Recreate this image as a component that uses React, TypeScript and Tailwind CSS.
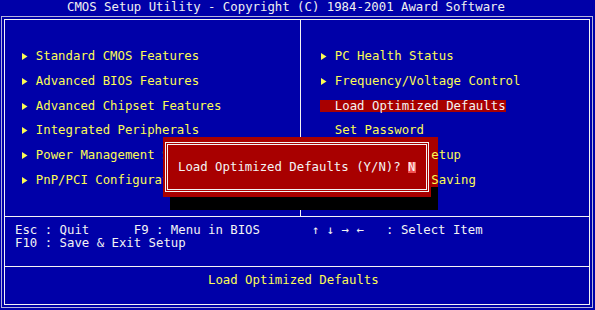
const left = [
  "Standard CMOS Features",
  "Advanced BIOS Features",
  "Advanced Chipset Features",
  "Integrated Peripherals",
  "Power Management Setup",
  "PnP/PCI Configurations",
];

const right = [
  { label: "PC Health Status", arrow: true },
  { label: "Frequency/Voltage Control", arrow: true },
  { label: "Load Optimized Defaults", arrow: false, active: true },
  { label: "Set Password", arrow: false },
  { label: "Save & Exit Setup", arrow: false },
  { label: "Exit Without Saving", arrow: false },
];

function Arrow() {
  return (
    <svg width="6" height="7" viewBox="0 0 6 7" className="ml-[1px]">
      <polygon points="0,0 5.5,3.5 0,7" fill="#fcfc54" />
    </svg>
  );
}

function Row({ label, arrow, active }: { label: string; arrow?: boolean; active?: boolean }) {
  if (active) {
    return (
      <div className="h-[24.8px] flex items-center">
        <span className="relative z-10 inline-block w-[25ch] pl-[2ch] bg-[#a80000] text-[#f4f4f4] leading-[12.5px] whitespace-pre">
          {label}
        </span>
      </div>
    );
  }
  return (
    <div className="h-[24.8px] flex items-center">
      <span className="w-[2ch] flex items-center">{arrow && <Arrow />}</span>
      <span className="relative z-10 text-[#fcfc54] whitespace-pre">{label}</span>
    </div>
  );
}

export default function App() {
  return (
    <div className="relative w-[595px] h-[310px] overflow-hidden bg-[#0000a8] font-['DejaVu_Sans_Mono',monospace] text-[12.33px] leading-[13px]">
      <div className="h-[16px] pl-[67px] pt-[1px] text-[#f0f0f0] whitespace-pre">
        CMOS Setup Utility - Copyright (C) 1984-2001 Award Software
      </div>

      <div className="ml-[1px] w-[592px] h-[292px] border border-[#b4b4dc] p-[2px]">
        <div className="h-full border border-[#f4f4f4] flex flex-col">
          {/* menu */}
          <div className="h-[197px] border-b border-[#f4f4f4] flex">
            <div className="w-[296px] border-r border-[#f4f4f4] pt-[24.2px] pl-[16px]">
              {left.map((l) => (
                <Row key={l} label={l} arrow />
              ))}
            </div>
            <div className="flex-1 pt-[24.2px] pl-[19px]">
              {right.map((r) => (
                <Row key={r.label} {...r} />
              ))}
            </div>
          </div>

          {/* keys */}
          <div className="h-[50px] border-b border-[#f4f4f4] pt-[6.5px] pl-[10px] text-[#f4f4f4] whitespace-pre">
            <div>Esc : Quit      F9 : Menu in BIOS       ↑ ↓ → ←   : Select Item</div>
            <div>F10 : Save &amp; Exit Setup</div>
          </div>

          {/* status */}
          <div className="flex-1 pt-[6.5px] pl-[203px] text-[#fcfc54] whitespace-pre">Load Optimized Defaults</div>
        </div>
      </div>

      {/* shadow */}
      <div className="absolute left-[431px] top-[137px] w-[7px] h-[50px] bg-[#a80000]" />
      <div className="absolute left-[431px] top-[187px] w-[7px] h-[10px] bg-black" />
      <div className="absolute left-[170px] top-[197px] w-[268px] h-[13px] bg-black" />

      {/* dialog */}
      <div className="absolute z-20 left-[163px] top-[137px] w-[268px] h-[60px] bg-[#a80000] pt-[5px] pl-[2px]">
        <div className="w-[264px] h-[50px] border border-[#f4f4f4] p-[1px]">
          <div className="h-full border border-[#f4f4f4] flex items-center pl-[10px] text-[#f4f4f4] whitespace-pre">
            Load Optimized Defaults (Y/N)?{" "}
            <span className="inline-block bg-[#f05050] leading-[11px] h-[11px]">N</span>
          </div>
        </div>
      </div>
    </div>
  );
}
